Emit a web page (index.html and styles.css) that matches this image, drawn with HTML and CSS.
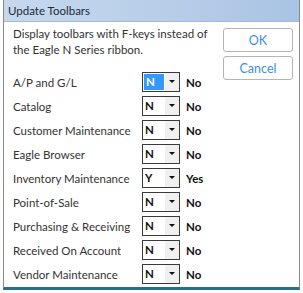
FILE: index.html
```html
<!DOCTYPE html>
<html lang="en">
<head>
    <meta charset="UTF-8">
    <title>Update Toolbars</title>
    <link rel="stylesheet" href="styles.css">
</head>
<body>
    <div class="dialog">
        <div class="titlebar">Update Toolbars</div>
        <div class="content">
            <div class="main">
                <p class="intro">Display toolbars with F-keys instead of<br>the Eagle N Series ribbon.</p>
                <div class="rows">
                    <div class="row">
                        <label>A/P and G/L</label>
                        <div class="combo selected"><span class="val">N</span><span class="arrow"></span></div>
                        <span class="state">No</span>
                    </div>
                    <div class="row">
                        <label>Catalog</label>
                        <div class="combo"><span class="val">N</span><span class="arrow"></span></div>
                        <span class="state">No</span>
                    </div>
                    <div class="row">
                        <label>Customer Maintenance</label>
                        <div class="combo"><span class="val">N</span><span class="arrow"></span></div>
                        <span class="state">No</span>
                    </div>
                    <div class="row">
                        <label>Eagle Browser</label>
                        <div class="combo"><span class="val">N</span><span class="arrow"></span></div>
                        <span class="state">No</span>
                    </div>
                    <div class="row">
                        <label>Inventory Maintenance</label>
                        <div class="combo"><span class="val">Y</span><span class="arrow"></span></div>
                        <span class="state">Yes</span>
                    </div>
                    <div class="row">
                        <label>Point-of-Sale</label>
                        <div class="combo"><span class="val">N</span><span class="arrow"></span></div>
                        <span class="state">No</span>
                    </div>
                    <div class="row">
                        <label>Purchasing &amp; Receiving</label>
                        <div class="combo"><span class="val">N</span><span class="arrow"></span></div>
                        <span class="state">No</span>
                    </div>
                    <div class="row">
                        <label>Received On Account</label>
                        <div class="combo"><span class="val">N</span><span class="arrow"></span></div>
                        <span class="state">No</span>
                    </div>
                    <div class="row">
                        <label>Vendor Maintenance</label>
                        <div class="combo"><span class="val">N</span><span class="arrow"></span></div>
                        <span class="state">No</span>
                    </div>
                </div>
            </div>
            <div class="buttons">
                <button class="btn">OK</button>
                <button class="btn">Cancel</button>
            </div>
        </div>
    </div>
</body>
</html>
```

FILE: styles.css
```css
html, body {
    margin: 0;
    width: 303px;
    height: 293px;
    overflow: hidden;
    background: #ffffff;
}
body {
    padding: 0 3px 0 3px;
    box-sizing: border-box;
    font-family: Lato, "Open Sans", sans-serif;
    color: #333333;
}
.dialog {
    height: 290px;
    box-sizing: border-box;
    border: 1px solid #8a8a8a;
    border-top: none;
    border-bottom: 3px solid #2c6e8a;
    background: #ffffff;
}
.titlebar {
    height: 21px;
    line-height: 22px;
    padding-left: 4px;
    font-size: 11.5px;
    color: #1e2a36;
    background: linear-gradient(to right, #c6d8ee, #b6cde8 60%, #a9c3e4);
    border-bottom: 1px solid #a6b8cf;
}
.content {
    display: flex;
    padding: 4px 6px 0 9px;
}
.main {
    flex: 1;
}
.intro {
    margin: 0;
    font-size: 11.5px;
    line-height: 16px;
    white-space: nowrap;
}
.rows {
    margin-top: 12px;
}
.row {
    display: flex;
    align-items: center;
    height: 24px;
    font-size: 11.5px;
}
.row label {
    flex: none;
    width: 129px;
    white-space: nowrap;
}
.combo {
    display: flex;
    width: 38px;
    height: 20px;
    box-sizing: border-box;
    border: 1px solid #3a3a3a;
    background: #ffffff;
}
.val {
    flex: 1;
    font-size: 11.5px;
    font-weight: bold;
    line-height: 18px;
    padding-left: 2px;
    color: #111111;
}
.selected .val {
    background: #3399ff;
    color: #ffffff;
    margin: 1px;
    line-height: 16px;
}
.arrow {
    width: 14px;
    background: #f0f0f0;
    position: relative;
}
.arrow::after {
    content: "";
    position: absolute;
    left: 4px;
    top: 7px;
    border-left: 3px solid transparent;
    border-right: 3px solid transparent;
    border-top: 3px solid #111111;
}
.state {
    margin-left: 6px;
    font-size: 11.5px;
    font-weight: bold;
    color: #111111;
}
.buttons {
    display: flex;
    flex-direction: column;
    gap: 4px;
    padding-top: 2px;
}
.btn {
    width: 70px;
    height: 24px;
    font-family: Lato, "Open Sans", sans-serif;
    font-size: 12.5px;
    color: #3b8fe0;
    background: #ffffff;
    border: 1px solid #b5b5b5;
    border-radius: 3px;
}
```
